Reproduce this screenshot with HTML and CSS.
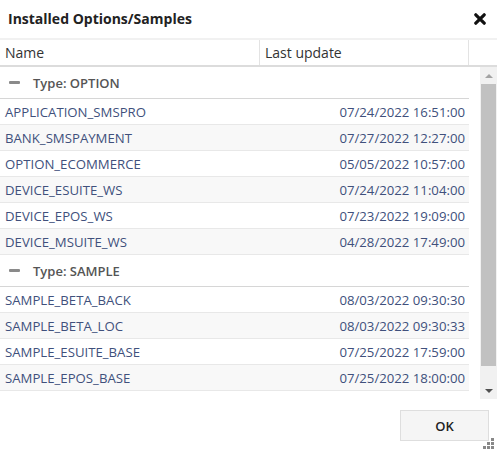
FILE: index.html
```html
<!DOCTYPE html>
<html>
<head>
<meta charset="utf-8">
<link rel="stylesheet" href="styles.css">
</head>
<body>
<div class="dialog">
  <div class="titlebar">
    <span class="title">Installed Options/Samples</span>
    <svg class="close" width="12" height="12" viewBox="0 0 12 12"><path d="M1.8 1.8 L10.2 10.2 M10.2 1.8 L1.8 10.2" stroke="#111" stroke-width="3.2" stroke-linecap="round"/></svg>
  </div>
  <div class="head">
    <div class="hc name">Name</div>
    <div class="hc upd">Last update</div>
    <div class="hc fill"></div>
  </div>
  <div class="body">
    <div class="rows">
      <div class="group"><span class="minus"></span><span>Type: OPTION</span></div>
      <div class="row"><span>APPLICATION_SMSPRO</span><span>07/24/2022 16:51:00</span></div>
      <div class="row alt"><span>BANK_SMSPAYMENT</span><span>07/27/2022 12:27:00</span></div>
      <div class="row"><span>OPTION_ECOMMERCE</span><span>05/05/2022 10:57:00</span></div>
      <div class="row alt"><span>DEVICE_ESUITE_WS</span><span>07/24/2022 11:04:00</span></div>
      <div class="row"><span>DEVICE_EPOS_WS</span><span>07/23/2022 19:09:00</span></div>
      <div class="row alt"><span>DEVICE_MSUITE_WS</span><span>04/28/2022 17:49:00</span></div>
      <div class="group"><span class="minus"></span><span>Type: SAMPLE</span></div>
      <div class="row"><span>SAMPLE_BETA_BACK</span><span>08/03/2022 09:30:30</span></div>
      <div class="row alt"><span>SAMPLE_BETA_LOC</span><span>08/03/2022 09:30:33</span></div>
      <div class="row"><span>SAMPLE_ESUITE_BASE</span><span>07/25/2022 17:59:00</span></div>
      <div class="row alt"><span>SAMPLE_EPOS_BASE</span><span>07/25/2022 18:00:00</span></div>
    </div>
    <div class="scrollbar">
      <div class="arrow up"></div>
      <div class="thumb"></div>
      <div class="arrow down"></div>
    </div>
  </div>
  <div class="footer">
    <button class="ok">OK</button>
  </div>
  <div class="grip">
    <i></i><i></i><i></i><i></i><i></i><i></i>
  </div>
</div>
</body>
</html>
```
FILE: styles.css
```css
html, body {
  margin: 0;
  padding: 0;
  background: #fff;
}
body {
  font-family: "Open Sans", "Liberation Sans", sans-serif;
  width: 497px;
  height: 451px;
  overflow: hidden;
}
.dialog {
  position: relative;
  width: 497px;
  height: 451px;
}
.titlebar {
  height: 38px;
  display: flex;
  align-items: center;
  justify-content: space-between;
  padding: 0 11px 0 8px;
  box-sizing: border-box;
}
.title {
  font-size: 14px;
  font-weight: 700;
  color: #222;
  margin-top: -1px;
}
.close {
  display: block;
  margin-top: -1px;
}
.head {
  display: flex;
  height: 29px;
  border-top: 2px solid #f1f1f1;
  border-bottom: 2px solid #dcdcdc;
  box-sizing: border-box;
  font-size: 14px;
  color: #333;
}
.hc {
  display: flex;
  align-items: center;
  border-right: 1px solid #e3e3e3;
  box-sizing: border-box;
}
.name { width: 260px; padding-left: 5px; }
.upd { width: 209px; padding-left: 5px; }
.fill { flex: 1; border-right: none; }
.body {
  display: flex;
  height: 332px;
}
.rows {
  width: 469px;
  display: flex;
  flex-direction: column;
}
.group {
  height: 32px;
  box-sizing: border-box;
  border-bottom: 1px solid #d6d6d6;
  display: flex;
  align-items: center;
  font-size: 13px;
  font-weight: 600;
  color: #555;
}
.minus {
  width: 11px;
  height: 3px;
  background: #8a8a8a;
  border-radius: 1px;
  margin: 0 13px 0 9px;
}
.row {
  height: 26px;
  box-sizing: border-box;
  border-bottom: 1px solid #e8e8e8;
  display: flex;
  align-items: center;
  justify-content: space-between;
  padding: 0 4px 0 5px;
  font-size: 13.2px;
  color: #40507c;
}
.row.alt { background: #f8f8f8; }
.scrollbar {
  margin-left: 11px;
  width: 17px;
  background: #f1f1f1;
  display: flex;
  flex-direction: column;
  align-items: center;
}
.arrow {
  height: 17px;
  width: 17px;
  display: flex;
  align-items: center;
  justify-content: center;
}
.arrow::before {
  content: "";
  border-left: 4px solid transparent;
  border-right: 4px solid transparent;
}
.up::before { border-bottom: 4px solid #a3a3a3; }
.down::before { border-top: 4px solid #505050; }
.thumb {
  width: 15px;
  height: 282px;
  background: #c1c1c1;
  margin: 0 0 auto;
}
.footer {
  display: flex;
  justify-content: flex-end;
  padding: 11px 8px 0 0;
}
.ok {
  width: 89px;
  height: 31px;
  background: #f5f5f5;
  border: 1px solid #dedede;
  font-family: "Open Sans", "Liberation Sans", sans-serif;
  font-size: 13px;
  font-weight: 600;
  color: #222;
  padding: 0;
}
.grip {
  position: absolute;
  right: 2px;
  bottom: 1px;
  width: 12px;
  height: 12px;
  display: grid;
  grid-template-columns: repeat(3, 3px);
  grid-template-rows: repeat(3, 3px);
  gap: 1px;
}
.grip i {
  display: block;
  width: 3px;
  height: 3px;
  background: #888;
}
.grip i:nth-child(1) { grid-column: 3; grid-row: 1; }
.grip i:nth-child(2) { grid-column: 2; grid-row: 2; }
.grip i:nth-child(3) { grid-column: 3; grid-row: 2; }
.grip i:nth-child(4) { grid-column: 1; grid-row: 3; }
.grip i:nth-child(5) { grid-column: 2; grid-row: 3; }
.grip i:nth-child(6) { grid-column: 3; grid-row: 3; }
```
